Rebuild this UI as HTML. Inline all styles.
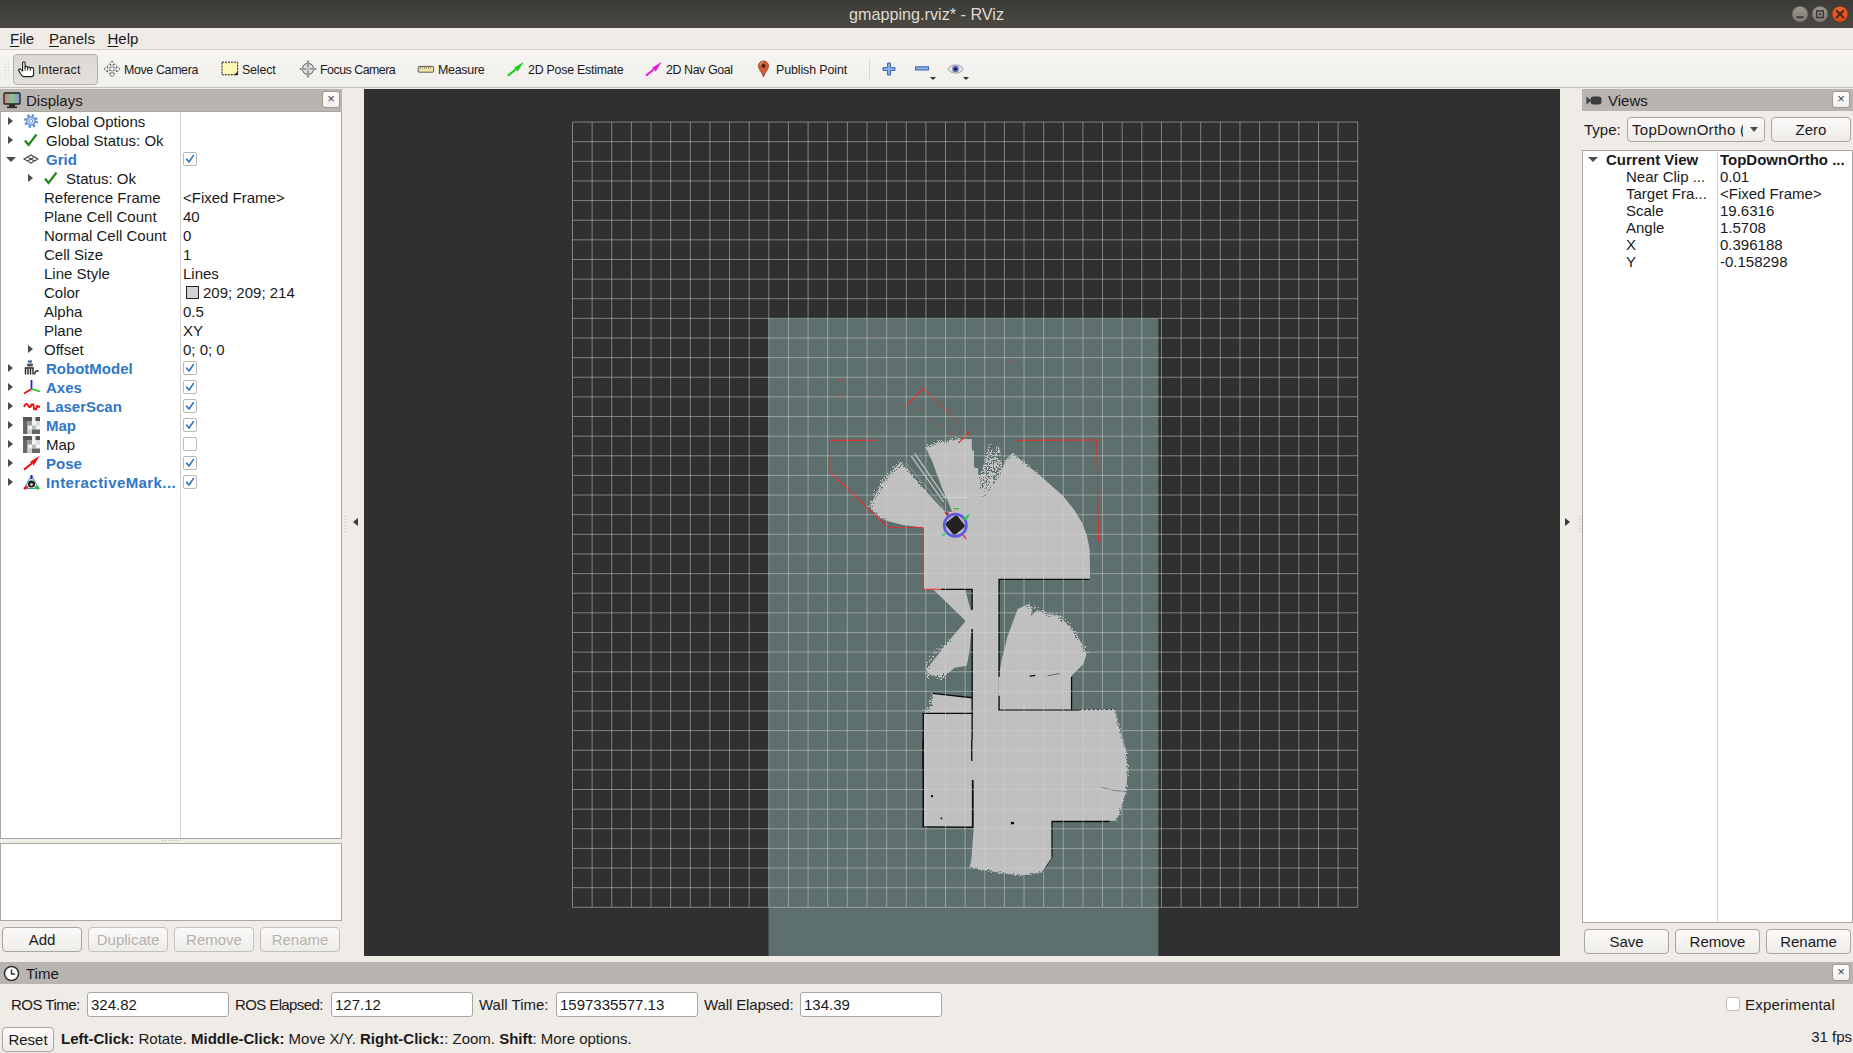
<!DOCTYPE html>
<html>
<head>
<meta charset="utf-8">
<title>gmapping.rviz* - RViz</title>
<style>
*{box-sizing:border-box;margin:0;padding:0}
html,body{width:1853px;height:1053px;overflow:hidden;background:#efebe7}
body{font-family:"Liberation Sans",sans-serif;font-size:15px;color:#1a1a1a;position:relative}
.abs{position:absolute}
.t{position:absolute;white-space:nowrap;line-height:19px;height:19px}
#titlebar{left:0;top:0;width:1853px;height:28px;background:linear-gradient(#3b3a36,#4a4943)}
#titletext{left:0;top:0;width:1853px;height:28px;line-height:29px;text-align:center;color:#dfdbd2;font-size:16.2px}
#menubar{left:0;top:28px;width:1853px;height:21px;background:#efebe7}
#menubar span{position:absolute;top:1px;line-height:20px;font-size:15px}
#menubar u{text-decoration-thickness:1px;text-underline-offset:2px}
#toolbar{left:0;top:49px;width:1853px;height:39px;background:linear-gradient(#f7f5f1,#f1efeb);border-top:1px solid #d3cfc9;border-bottom:1px solid #c4c0ba}
.tb{position:absolute;top:60px;line-height:20px;font-size:12.4px;letter-spacing:-0.25px;white-space:nowrap}
.paneltitle{background:#b8b4b0}
.paneltitle .t{font-size:15px;line-height:22px;height:22px;margin-top:1px}
.closebtn{position:absolute;width:18px;height:17px;border:1px solid #9c9892;border-radius:3px;background:linear-gradient(#fdfdfc,#f2f0ed)}
.closebtn:after{content:"×";position:absolute;left:0;top:0;width:16px;height:15px;line-height:14px;text-align:center;font-size:13px;color:#444}
.tree{background:#fff;border:1px solid #aaa7a2}
.btn{position:absolute;border:1px solid #a9a59f;border-radius:4px;background:linear-gradient(#fbfaf9,#eeece8);text-align:center;font-size:15px;line-height:23px;height:25px}
.btn.dis{color:#b4b1ad;border-color:#c3bfba}
.inp{position:absolute;background:#fff;border:1px solid #aaa6a0;border-radius:3px;height:25px;top:991.5px;line-height:23px;padding-left:3px;font-size:15px}
.cb{position:absolute;width:14px;height:14px;border:1px solid #bcb8b3;border-radius:2px;background:#fff}
.cb svg{position:absolute;left:1px;top:1px}
.blue{color:#3077c6;font-weight:bold}
.arr{position:absolute;width:0;height:0;border-top:4.5px solid transparent;border-bottom:4.5px solid transparent;border-left:5px solid #4b4b4b}
.arrd{position:absolute;width:0;height:0;border-left:5px solid transparent;border-right:5px solid transparent;border-top:5.5px solid #4b4b4b}
</style>
</head>
<body>
<!-- TITLE BAR -->
<div id="titlebar" class="abs"></div>
<div id="titletext" class="abs">gmapping.rviz* - RViz</div>
<svg class="abs" style="left:1785px;top:0" width="68" height="28">
 <defs><linearGradient id="wbg" x1="0" y1="0" x2="0" y2="1"><stop offset="0" stop-color="#9a9791"/><stop offset="1" stop-color="#7f7c76"/></linearGradient>
 <linearGradient id="wbc" x1="0" y1="0" x2="0" y2="1"><stop offset="0" stop-color="#f0642c"/><stop offset="1" stop-color="#dd4a16"/></linearGradient></defs>
 <circle cx="15" cy="14.2" r="8" fill="url(#wbg)" stroke="#55534e" stroke-width="0.8"/>
 <rect x="11.3" y="16.4" width="7.4" height="1.8" fill="#3c3b37"/>
 <circle cx="35" cy="14.2" r="8" fill="url(#wbg)" stroke="#55534e" stroke-width="0.8"/>
 <rect x="31.7" y="10.9" width="6.6" height="6.6" fill="none" stroke="#3c3b37" stroke-width="1.5"/>
 <rect x="34" y="13.2" width="2" height="2" fill="#3c3b37"/>
 <circle cx="55" cy="14.2" r="8" fill="url(#wbc)" stroke="#7a3418" stroke-width="0.8"/>
 <path d="M51.6 10.8 L58.4 17.6 M58.4 10.8 L51.6 17.6" stroke="#3c2a20" stroke-width="2" stroke-linecap="round"/>
</svg>

<!-- MENU BAR -->
<div id="menubar" class="abs">
 <span style="left:10px"><u>F</u>ile</span>
 <span style="left:49px"><u>P</u>anels</span>
 <span style="left:107.5px"><u>H</u>elp</span>
</div>

<!-- TOOLBAR -->
<div id="toolbar" class="abs"></div>
<div class="abs" style="left:5px;top:61px;width:1px;height:17px;background:repeating-linear-gradient(180deg,#d2cec8 0 1px,transparent 1px 3px)"></div><div class="abs" style="left:8px;top:61px;width:1px;height:17px;background:repeating-linear-gradient(180deg,#d2cec8 0 1px,transparent 1px 3px)"></div>
<div class="abs" style="left:13px;top:54px;width:85px;height:31px;border:1px solid #b3afa9;border-radius:4px;background:linear-gradient(#dcd9d4,#e3e0db)"></div>
<svg class="abs" style="left:18px;top:60.5px" width="17" height="17" viewBox="0 0 17 17"><path d="M4.6 10 V2 C4.6 0.3 7.1 0.3 7.1 2 V6.4 C7.1 5 9.7 5 9.7 6.6 V7 C9.7 5.6 12.3 5.6 12.3 7.2 V7.6 C12.3 6.3 15.6 6.2 15.6 8.2 V13.2 C15.6 14.8 14.7 15.6 13.2 15.6 H6.2 C4.8 15.6 3.8 14.8 3.2 13.7 L0.9 9.9 C0.1 8.4 1.6 7.4 2.6 8.4 Z" fill="#fff" stroke="#222" stroke-width="1.15" stroke-linejoin="round"/><path d="M7.1 6.4 V9.6 M9.7 7 V9.6 M12.3 7.6 V9.6" stroke="#222" stroke-width="1" fill="none"/></svg>
<div class="tb" style="left:38px;letter-spacing:0.15px">Interact</div>
<svg class="abs" style="left:103px;top:60px" width="18" height="18" viewBox="0 0 18 18"><path d="M9 1 L12 4.5 H10 V8 H13.5 V6 L17 9 L13.5 12 V10 H10 V13.5 H12 L9 17 L6 13.5 H8 V10 H4.5 V12 L1 9 L4.5 6 V8 H8 V4.5 H6 Z" fill="#fdfdfd" stroke="#4a4a4a" stroke-width="1" stroke-dasharray="1.3 0.6"/></svg>
<div class="tb" style="left:124px;letter-spacing:-0.35px">Move Camera</div>
<svg class="abs" style="left:221px;top:61px" width="18" height="15" viewBox="0 0 18 15"><rect x="1" y="1.2" width="15.6" height="12.6" fill="#fcf7b6" stroke="#1c1c1c" stroke-width="1" stroke-dasharray="2 1"/><path d="M16.8 10.5 V14 H13.2 Z" fill="#111"/></svg>
<div class="tb" style="left:242px;letter-spacing:-0.16px">Select</div>
<svg class="abs" style="left:298.5px;top:60.2px" width="18" height="18" viewBox="0 0 18 18"><circle cx="9" cy="9" r="5.6" fill="#f4f4f4" stroke="#6a6a6a" stroke-width="1.1"/><circle cx="9" cy="9" r="3.3" fill="none" stroke="#8a8a8a" stroke-width="0.9" stroke-dasharray="1.2 0.8"/><path d="M9 0.8 V6.4 M9 11.6 V17.2 M0.8 9 H6.4 M11.6 9 H17.2" stroke="#6a6a6a" stroke-width="2.2"/><path d="M9 1.4 V6 M9 12 V16.6 M1.4 9 H6 M12 9 H16.6" stroke="#f4f4f4" stroke-width="0.8"/><path d="M9 6 V12 M6 9 H12" stroke="#8a8a8a" stroke-width="0.8"/></svg>
<div class="tb" style="left:320px;letter-spacing:-0.5px">Focus Camera</div>
<svg class="abs" style="left:417px;top:65px" width="18" height="9" viewBox="0 0 18 9"><rect x="1.2" y="1.4" width="15.4" height="5.8" rx="0.8" fill="#ece3a4" stroke="#5a5a5a" stroke-width="1"/><path d="M3.5 2 V4 M5.5 2 V3.4 M7.5 2 V4 M9.5 2 V3.4 M11.5 2 V4 M13.5 2 V3.4" stroke="#7a7452" stroke-width="0.7"/></svg>
<div class="tb" style="left:438px;letter-spacing:-0.25px">Measure</div>
<svg class="abs" style="left:507px;top:61px" width="17" height="16" viewBox="0 0 17 16"><path d="M1 14.6 L9 8.2" stroke="#18d018" stroke-width="2"/><path d="M6.8 7 L16.8 0.8 L10.6 10.8 L9.4 8.6 Z" fill="#18d018"/></svg>
<div class="tb" style="left:528px;letter-spacing:-0.24px">2D Pose Estimate</div>
<svg class="abs" style="left:645px;top:61px" width="17" height="16" viewBox="0 0 17 16"><path d="M1 14.6 L9 8.2" stroke="#e818d8" stroke-width="2"/><path d="M6.8 7 L16.8 0.8 L10.6 10.8 L9.4 8.6 Z" fill="#e818d8"/></svg>
<div class="tb" style="left:666px;letter-spacing:-0.4px">2D Nav Goal</div>
<svg class="abs" style="left:757px;top:60px" width="13" height="18" viewBox="0 0 13 18"><path d="M6.5 17 C5.5 12.5 1.5 10 1.5 6 C1.5 3 3.7 1 6.5 1 C9.3 1 11.5 3 11.5 6 C11.5 10 7.5 12.5 6.5 17 Z" fill="#cc5a32" stroke="#9a4422" stroke-width="0.8"/><path d="M3.2 5 C3.4 3.2 4.8 2.2 6 2.2" stroke="#eea988" stroke-width="1" fill="none"/><circle cx="6.5" cy="5.8" r="1.9" fill="#4a1c0c"/></svg>
<div class="tb" style="left:776px;letter-spacing:-0.1px">Publish Point</div>
<div class="abs" style="left:869px;top:60px;width:1px;height:19px;background:#d9d5cf"></div>
<svg class="abs" style="left:882px;top:62px" width="14" height="14" viewBox="0 0 14 14"><path d="M5.6 1 H8.4 V5.6 H13 V8.4 H8.4 V13 H5.6 V8.4 H1 V5.6 H5.6 Z" fill="#8db4e6" stroke="#2f62b0" stroke-width="1"/></svg>
<svg class="abs" style="left:915px;top:66px" width="14" height="6" viewBox="0 0 14 6"><rect x="0.6" y="0.8" width="12.8" height="3.2" fill="#8db4e6" stroke="#2f62b0" stroke-width="1"/></svg>
<div class="abs" style="left:930px;top:77px;width:0;height:0;border-left:3px solid transparent;border-right:3px solid transparent;border-top:3.5px solid #333"></div>
<svg class="abs" style="left:947px;top:63px" width="17" height="12" viewBox="0 0 17 12"><path d="M0.8 6 C4 0.5 13 0.5 16.2 6 C13 11.5 4 11.5 0.8 6 Z" fill="#e8e8ee" stroke="#9a9aa8" stroke-width="1"/><circle cx="8.5" cy="6" r="3.3" fill="#5b6fb8"/><circle cx="8.5" cy="6" r="1.6" fill="#1a1a30"/></svg>
<div class="abs" style="left:963px;top:77px;width:0;height:0;border-left:3px solid transparent;border-right:3px solid transparent;border-top:3.5px solid #333"></div>

<!-- LEFT PANEL -->
<div class="abs paneltitle" style="left:0;top:89px;width:342px;height:22px"><div class="t" style="left:26px;top:0">Displays</div></div>
<svg class="abs" style="left:3px;top:92px" width="18" height="17" viewBox="0 0 18 17"><defs><linearGradient id="mon" x1="0" x2="1" y1="0" y2="0"><stop offset="0" stop-color="#d9797f"/><stop offset="0.5" stop-color="#86c78d"/><stop offset="1" stop-color="#8f8fd8"/></linearGradient></defs><rect x="1" y="1" width="16" height="11" rx="1" fill="url(#mon)" stroke="#222" stroke-width="1.3"/><rect x="6" y="12.5" width="6" height="2" fill="#222"/><rect x="4" y="14.5" width="10" height="1.6" fill="#222"/></svg>
<div class="closebtn" style="left:322px;top:91px"></div>
<div class="abs tree" style="left:0;top:111px;width:342px;height:728px"></div>
<div class="abs" style="left:180px;top:112px;width:1px;height:726px;background:#d7d5d2"></div>
<div class="arr" style="left:8px;top:116.5px"></div>
<svg class="abs" style="left:23px;top:113px" width="16" height="16" viewBox="0 0 16 16"><circle cx="8" cy="8" r="5.6" fill="none" stroke="#5b8ed6" stroke-width="2.6" stroke-dasharray="2.2 2.2"/><circle cx="8" cy="8" r="4.2" fill="#c9dbf3" stroke="#5b8ed6" stroke-width="1.2"/><circle cx="8" cy="8" r="1.6" fill="#fff" stroke="#5b8ed6" stroke-width="0.8"/></svg>
<div class="t" style="left:46px;top:112px">Global Options</div>
<div class="arr" style="left:8px;top:135.5px"></div>
<svg class="abs" style="left:23px;top:132px" width="16" height="16" viewBox="0 0 16 16"><path d="M2 8.5 L5.5 13 L13.5 2.5" fill="none" stroke="#1d8a1d" stroke-width="2.2" stroke-linecap="butt" stroke-linejoin="miter"/></svg>
<div class="t" style="left:46px;top:131px">Global Status: Ok</div>
<div class="arrd" style="left:6px;top:156.5px"></div>
<svg class="abs" style="left:23px;top:151px" width="16" height="16" viewBox="0 0 16 16"><path d="M1 8 L8 4 L15 8 L8 12 Z M4.5 6 L11.5 10 M11.5 6 L4.5 10" fill="none" stroke="#444" stroke-width="1.1"/></svg>
<div class="t blue" style="left:46px;top:150px">Grid</div>
<div class="cb" style="left:183px;top:152px"><svg width="10" height="10" viewBox="0 0 10 10"><path d="M1.6 5.2 L4 8 L8.4 1.6" fill="none" stroke="#2f6fb8" stroke-width="1.6" stroke-linecap="round" stroke-linejoin="round"/></svg></div>
<div class="arr" style="left:28px;top:173.5px"></div>
<svg class="abs" style="left:43px;top:170px" width="16" height="16" viewBox="0 0 16 16"><path d="M2 8.5 L5.5 13 L13.5 2.5" fill="none" stroke="#1d8a1d" stroke-width="2.2" stroke-linecap="butt" stroke-linejoin="miter"/></svg>
<div class="t" style="left:66px;top:169px">Status: Ok</div>
<div class="t" style="left:44px;top:188px">Reference Frame</div>
<div class="t" style="left:183px;top:188px">&lt;Fixed Frame&gt;</div>
<div class="t" style="left:44px;top:207px">Plane Cell Count</div>
<div class="t" style="left:183px;top:207px">40</div>
<div class="t" style="left:44px;top:226px">Normal Cell Count</div>
<div class="t" style="left:183px;top:226px">0</div>
<div class="t" style="left:44px;top:245px">Cell Size</div>
<div class="t" style="left:183px;top:245px">1</div>
<div class="t" style="left:44px;top:264px">Line Style</div>
<div class="t" style="left:183px;top:264px">Lines</div>
<div class="t" style="left:44px;top:283px">Color</div>
<div class="abs" style="left:186px;top:286px;width:13px;height:13px;background:#d1d1d6;border:1px solid #222"></div>
<div class="t" style="left:203px;top:283px">209; 209; 214</div>
<div class="t" style="left:44px;top:302px">Alpha</div>
<div class="t" style="left:183px;top:302px">0.5</div>
<div class="t" style="left:44px;top:321px">Plane</div>
<div class="t" style="left:183px;top:321px">XY</div>
<div class="arr" style="left:28px;top:344.5px"></div>
<div class="t" style="left:44px;top:340px">Offset</div>
<div class="t" style="left:183px;top:340px">0; 0; 0</div>
<div class="arr" style="left:8px;top:363.5px"></div>
<svg class="abs" style="left:23px;top:360px" width="18" height="16" viewBox="0 0 18 16"><rect x="5" y="0.5" width="4" height="2" fill="#2a4fa0"/><rect x="4" y="3.5" width="6" height="3" rx="1" fill="#555"/><path d="M2.5 14.5 V8 H10 V14.5 M5 9 V14.5 M7.5 9 V14.5 M11.5 14.5 C12 11 14 10 15.5 11.5" fill="none" stroke="#222" stroke-width="1.4"/></svg>
<div class="t blue" style="left:46px;top:359px">RobotModel</div>
<div class="cb" style="left:183px;top:361px"><svg width="10" height="10" viewBox="0 0 10 10"><path d="M1.6 5.2 L4 8 L8.4 1.6" fill="none" stroke="#2f6fb8" stroke-width="1.6" stroke-linecap="round" stroke-linejoin="round"/></svg></div>
<div class="arr" style="left:8px;top:382.5px"></div>
<svg class="abs" style="left:23px;top:379px" width="18" height="16" viewBox="0 0 18 16"><path d="M8.5 10 V1" stroke="#2020ff" stroke-width="1.8"/><path d="M8.5 10 L1 14.5" stroke="#ee1010" stroke-width="1.8"/><path d="M8.5 10 L17 12.5" stroke="#10cc10" stroke-width="1.8"/></svg>
<div class="t blue" style="left:46px;top:378px">Axes</div>
<div class="cb" style="left:183px;top:380px"><svg width="10" height="10" viewBox="0 0 10 10"><path d="M1.6 5.2 L4 8 L8.4 1.6" fill="none" stroke="#2f6fb8" stroke-width="1.6" stroke-linecap="round" stroke-linejoin="round"/></svg></div>
<div class="arr" style="left:8px;top:401.5px"></div>
<svg class="abs" style="left:23px;top:398px" width="18" height="16" viewBox="0 0 18 16"><path d="M1 9 C2.5 5 4 5 5.5 8 C6.5 10 8 9 8.5 6.5 L10.5 6.5 L11 11 L13 11.5 L14 8 L17 9" fill="none" stroke="#ee1010" stroke-width="1.9" stroke-linejoin="round"/></svg>
<div class="t blue" style="left:46px;top:397px">LaserScan</div>
<div class="cb" style="left:183px;top:399px"><svg width="10" height="10" viewBox="0 0 10 10"><path d="M1.6 5.2 L4 8 L8.4 1.6" fill="none" stroke="#2f6fb8" stroke-width="1.6" stroke-linecap="round" stroke-linejoin="round"/></svg></div>
<div class="arr" style="left:8px;top:420.5px"></div>
<svg class="abs" style="left:23px;top:417px" width="17" height="17" viewBox="0 0 17 17"><rect x="0" y="0" width="17" height="17" fill="#f2f2f2"/><rect x="0" y="0" width="9" height="4" fill="#555"/><rect x="0" y="4" width="4.5" height="13" fill="#666"/><rect x="4.5" y="4" width="4.5" height="4.5" fill="#999"/><rect x="12.5" y="0" width="4.5" height="4" fill="#555"/><rect x="9" y="8.5" width="4" height="4" fill="#bbb"/><rect x="9" y="12.5" width="8" height="4.5" fill="#666"/><rect x="4.5" y="12.5" width="4.5" height="4.5" fill="#ccc"/><rect x="13" y="4" width="4" height="4.5" fill="#ddd"/></svg>
<div class="t blue" style="left:46px;top:416px">Map</div>
<div class="cb" style="left:183px;top:418px"><svg width="10" height="10" viewBox="0 0 10 10"><path d="M1.6 5.2 L4 8 L8.4 1.6" fill="none" stroke="#2f6fb8" stroke-width="1.6" stroke-linecap="round" stroke-linejoin="round"/></svg></div>
<div class="arr" style="left:8px;top:439.5px"></div>
<svg class="abs" style="left:23px;top:436px" width="17" height="17" viewBox="0 0 17 17"><rect x="0" y="0" width="17" height="17" fill="#f2f2f2"/><rect x="0" y="0" width="9" height="4" fill="#555"/><rect x="0" y="4" width="4.5" height="13" fill="#666"/><rect x="4.5" y="4" width="4.5" height="4.5" fill="#999"/><rect x="12.5" y="0" width="4.5" height="4" fill="#555"/><rect x="9" y="8.5" width="4" height="4" fill="#bbb"/><rect x="9" y="12.5" width="8" height="4.5" fill="#666"/><rect x="4.5" y="12.5" width="4.5" height="4.5" fill="#ccc"/><rect x="13" y="4" width="4" height="4.5" fill="#ddd"/></svg>
<div class="t" style="left:46px;top:435px">Map</div>
<div class="cb" style="left:183px;top:437px"></div>
<div class="arr" style="left:8px;top:458.5px"></div>
<svg class="abs" style="left:23px;top:455px" width="18" height="16" viewBox="0 0 18 16"><path d="M1 14.6 L9 8.2" stroke="#ee1010" stroke-width="2"/><path d="M6.8 7 L16.8 0.8 L10.6 10.8 L9.4 8.6 Z" fill="#ee1010"/></svg>
<div class="t blue" style="left:46px;top:454px">Pose</div>
<div class="cb" style="left:183px;top:456px"><svg width="10" height="10" viewBox="0 0 10 10"><path d="M1.6 5.2 L4 8 L8.4 1.6" fill="none" stroke="#2f6fb8" stroke-width="1.6" stroke-linecap="round" stroke-linejoin="round"/></svg></div>
<div class="arr" style="left:8px;top:477.5px"></div>
<svg class="abs" style="left:23px;top:474px" width="18" height="17" viewBox="0 0 18 17"><path d="M8.5 1.5 L16 14.5 H1 Z" fill="#ddd" stroke="#3a9" stroke-width="1"/><path d="M8.5 1 L8.5 5" stroke="#22c" stroke-width="2"/><path d="M1 15 L4.5 12.5" stroke="#d22" stroke-width="2.4"/><path d="M16 15 L12.5 12.5" stroke="#2b2" stroke-width="2.4"/><circle cx="8.5" cy="10" r="3.6" fill="#222"/><circle cx="8.5" cy="10.5" r="1.3" fill="#eee"/></svg>
<div class="t blue" style="left:46px;top:473px;letter-spacing:0.42px">InteractiveMark...</div>
<div class="cb" style="left:183px;top:475px"><svg width="10" height="10" viewBox="0 0 10 10"><path d="M1.6 5.2 L4 8 L8.4 1.6" fill="none" stroke="#2f6fb8" stroke-width="1.6" stroke-linecap="round" stroke-linejoin="round"/></svg></div>
<div class="abs" style="left:162px;top:840px;width:18px;height:1px;background:repeating-linear-gradient(90deg,#b9b5b0 0 1px,transparent 1px 3px)"></div>
<div class="abs tree" style="left:0;top:843px;width:342px;height:78px"></div>
<div class="btn" style="left:2px;top:927px;width:80px">Add</div>
<div class="btn dis" style="left:88px;top:927px;width:80px">Duplicate</div>
<div class="btn dis" style="left:174px;top:927px;width:80px">Remove</div>
<div class="btn dis" style="left:260px;top:927px;width:80px">Rename</div>
<div class="abs" style="left:353px;top:518.4px;width:0;height:0;border-top:4.2px solid transparent;border-bottom:4.2px solid transparent;border-right:5px solid #3a3a3a"></div>
<div class="abs" style="left:345px;top:516px;width:1px;height:17px;background:repeating-linear-gradient(180deg,#bdb9b4 0 1px,transparent 1px 3px)"></div>

<!-- 3D VIEW -->
<div id="view" class="abs" style="left:364px;top:89px;width:1196px;height:867px;background:#303030;overflow:hidden"><svg class="abs" style="left:0;top:0" width="1196" height="867" viewBox="364 89 1196 867" shape-rendering="auto">
<rect x="768.5" y="318.6" width="389.8" height="700" fill="#5e706d"/>
<polygon points="923.2,527.6 902.7,525 888.5,521.2 879,517.4 870,506.9 875.2,495.5 881.8,483.2 891.3,471.8 900.8,462.3 905.6,468 917,481.3 926.5,491.7 936,502.2 945.5,511.7 952.1,511.7 948.3,502.2 941.7,487 936,471.8 932.2,461.3 925.5,447.1 928.4,445.7 938.8,441.9 945.5,440.9 951.2,439.5 971.7,438.9 972,450.3 974,451 974,467.6 978,468.2 978.3,475 980,475 983.3,466.3 986,455 989.3,443 991.3,443.6 992.8,452 995,452 996.6,445 998,445 1000,450 1001.9,462 1001.9,468.2 1007,458.5 1012.8,453.1 1024.2,462.8 1038.5,474.2 1049.9,484.2 1062.7,495.6 1074.1,509.8 1081.9,522.6 1086.9,535.4 1089.7,549.7 1090,579 923.2,579" fill="#c0c0c0" />
<polyline points="911.3,456.1 943.6,502.2" fill="none" stroke="#c0c0c0" stroke-width="1.25" />
<polyline points="914.6,453.3 945.5,498.4" fill="none" stroke="#c0c0c0" stroke-width="1.25" />
<polyline points="906,463 944,508" fill="none" stroke="#8a9896" stroke-width="1" />
<polyline points="942.6,497.6 968.3,497.6" fill="none" stroke="#f4f4f4" stroke-width="1" stroke-dasharray="1 1.6"/>
<g transform="translate(810 560) scale(0.19968)"><polygon points="567,0 1400,0 1400,96 945,96 945,760 815,760 815,345 808,350 800,450 785,530 725,540 665,590 590,575 585,545 700,400 780,305 620,150 567,147" fill="#c0c0c0" /><polygon points="778,150 812,150 812,250 803,245" fill="#5e706d" /><polygon points="945,585 960,500 990,380 1040,245 1090,222 1115,235 1105,280 1140,250 1180,270 1240,275 1300,330 1350,400 1385,470 1370,520 1310,580 1310,752 945,752" fill="#c0c0c0" /><polygon points="615,668 815,690 815,1052 567,1052 565,770 600,740" fill="#c0c0c0" /><polygon points="945,752 1525,748 1550,850 1580,950 1590,1052 815,1052 815,752" fill="#c0c0c0" /><polyline points="655,147 815,147" fill="none" stroke="#0b0b0b" stroke-width="6.6" /><polyline points="812,147 812,250" fill="none" stroke="#0b0b0b" stroke-width="6.6" /><polyline points="812,345 812,1005" fill="none" stroke="#0b0b0b" stroke-width="6.6" /><polyline points="945,97 1400,97" fill="none" stroke="#0b0b0b" stroke-width="6.6" /><polyline points="947,97 947,585" fill="none" stroke="#0b0b0b" stroke-width="6.6" /><polyline points="947,680 947,752" fill="none" stroke="#0b0b0b" stroke-width="6.6" /><polyline points="945,752 1350,752" fill="none" stroke="#0b0b0b" stroke-width="6.6" /><polyline points="1350,750 1530,748" fill="none" stroke="#0b0b0b" stroke-width="5" stroke-dasharray="8 14"/><polyline points="1310,585 1310,752" fill="none" stroke="#0b0b0b" stroke-width="6.6" /><polyline points="615,668 812,690" fill="none" stroke="#0b0b0b" stroke-width="6.6" /><polyline points="565,768 812,768" fill="none" stroke="#0b0b0b" stroke-width="6.6" /><polyline points="567,768 567,1052" fill="none" stroke="#0b0b0b" stroke-width="7.2" /><polyline points="1100,582 1128,578" fill="none" stroke="#0b0b0b" stroke-width="6.6" /><polyline points="1190,580 1250,568" fill="none" stroke="#4a5452" stroke-width="4" /><polyline points="1460,906 1485,904" fill="none" stroke="#4a5452" stroke-width="4" /></g>
<g transform="translate(810 740) scale(0.19968)"><polygon points="567,0 1560,0 1585,60 1590,150 1585,250 1565,320 1545,380 1530,405 1212,408 1215,590 1165,660 1110,672 1050,678 950,665 850,648 800,635 808,600 820,440 567,435" fill="#c0c0c0" /><polyline points="567,0 567,435" fill="none" stroke="#0b0b0b" stroke-width="7.6" /><polyline points="565,435 812,437" fill="none" stroke="#0b0b0b" stroke-width="6.6" /><polyline points="810,0 810,105" fill="none" stroke="#0b0b0b" stroke-width="6.6" /><polyline points="815,200 815,440" fill="none" stroke="#0b0b0b" stroke-width="9" /><polyline points="1210,408 1500,408" fill="none" stroke="#0b0b0b" stroke-width="7.2" /><polyline points="1212,408 1212,590" fill="none" stroke="#0b0b0b" stroke-width="6.6" /><polyline points="1212,590 1165,660" fill="none" stroke="#0b0b0b" stroke-width="4" /><polyline points="1458,236 1520,252 1580,258" fill="none" stroke="#4a5452" stroke-width="3" /><rect x="1006" y="410" width="16" height="12" fill="#0e0e0e"/><rect x="606" y="276" width="10" height="10" fill="#0e0e0e"/><rect x="654" y="388" width="8" height="8" fill="#0e0e0e"/></g>
<path d="M870 506h1v1h-1zM872 506h1v1h-1zM873 503h1v1h-1zM875 498h1v1h-1zM876 496h1v1h-1zM876 512h1v1h-1zM877 493h1v1h-1zM877 495h1v1h-1zM877 513h1v1h-1zM877 515h1v1h-1zM878 492h1v1h-1zM879 493h1v1h-1zM879 516h1v1h-1zM879 517h1v1h-1zM880 486h1v1h-1zM880 490h1v1h-1zM881 487h1v1h-1zM881 488h1v1h-1zM882 487h1v1h-1zM883 518h1v1h-1zM884 480h1v1h-1zM884 482h1v1h-1zM885 518h1v1h-1zM886 478h1v1h-1zM886 479h1v1h-1zM886 480h1v1h-1zM887 478h1v1h-1zM889 476h1v1h-1zM890 474h1v1h-1zM892 471h1v1h-1zM892 473h1v1h-1zM894 470h1v1h-1zM894 471h1v1h-1zM896 469h1v1h-1zM898 467h1v1h-1zM899 467h1v1h-1zM900 465h1v1h-1zM900 466h1v1h-1zM901 464h1v1h-1zM903 466h1v1h-1zM907 471h1v1h-1zM911 475h1v1h-1zM913 477h1v1h-1zM918 483h1v1h-1zM920 486h1v1h-1zM926 712h1v1h-1zM927 446h1v1h-1zM928 673h1v1h-1zM928 711h1v1h-1zM929 446h1v1h-1zM929 665h1v1h-1zM929 668h1v1h-1zM929 709h1v1h-1zM930 446h1v1h-1zM930 674h1v1h-1zM930 705h1v1h-1zM931 700h1v1h-1zM931 702h1v1h-1zM931 704h1v1h-1zM931 705h1v1h-1zM932 445h1v1h-1zM932 697h1v1h-1zM932 698h1v1h-1zM932 705h1v1h-1zM933 444h1v1h-1zM933 675h1v1h-1zM935 444h1v1h-1zM937 675h1v1h-1zM937 676h1v1h-1zM939 675h1v1h-1zM940 442h1v1h-1zM941 441h1v1h-1zM941 677h1v1h-1zM942 675h1v1h-1zM942 676h1v1h-1zM943 673h1v1h-1zM943 674h1v1h-1zM943 675h1v1h-1zM944 442h1v1h-1zM946 441h1v1h-1zM946 442h1v1h-1zM946 644h1v1h-1zM947 673h1v1h-1zM948 440h1v1h-1zM948 441h1v1h-1zM950 641h1v1h-1zM953 439h1v1h-1zM953 440h1v1h-1zM954 439h1v1h-1zM957 439h1v1h-1zM972 867h1v1h-1zM977 868h1v1h-1zM979 477h1v1h-1zM980 474h1v1h-1zM980 479h1v1h-1zM980 481h1v1h-1zM980 483h1v1h-1zM980 487h1v1h-1zM980 488h1v1h-1zM981 473h1v1h-1zM981 478h1v1h-1zM981 480h1v1h-1zM981 485h1v1h-1zM982 469h1v1h-1zM982 470h1v1h-1zM982 472h1v1h-1zM982 473h1v1h-1zM982 483h1v1h-1zM982 484h1v1h-1zM982 485h1v1h-1zM982 486h1v1h-1zM982 487h1v1h-1zM982 496h1v1h-1zM983 470h1v1h-1zM983 472h1v1h-1zM983 473h1v1h-1zM983 477h1v1h-1zM983 479h1v1h-1zM983 480h1v1h-1zM983 483h1v1h-1zM983 486h1v1h-1zM984 462h1v1h-1zM984 463h1v1h-1zM984 464h1v1h-1zM984 466h1v1h-1zM984 468h1v1h-1zM984 472h1v1h-1zM984 480h1v1h-1zM984 482h1v1h-1zM984 483h1v1h-1zM984 488h1v1h-1zM984 491h1v1h-1zM984 495h1v1h-1zM985 457h1v1h-1zM985 458h1v1h-1zM985 460h1v1h-1zM985 461h1v1h-1zM985 463h1v1h-1zM985 466h1v1h-1zM985 468h1v1h-1zM985 470h1v1h-1zM985 473h1v1h-1zM985 477h1v1h-1zM985 481h1v1h-1zM985 482h1v1h-1zM985 494h1v1h-1zM985 495h1v1h-1zM986 454h1v1h-1zM986 455h1v1h-1zM986 457h1v1h-1zM986 463h1v1h-1zM986 464h1v1h-1zM986 467h1v1h-1zM986 468h1v1h-1zM986 469h1v1h-1zM986 471h1v1h-1zM986 472h1v1h-1zM986 473h1v1h-1zM986 474h1v1h-1zM986 475h1v1h-1zM986 478h1v1h-1zM986 480h1v1h-1zM986 481h1v1h-1zM986 482h1v1h-1zM986 484h1v1h-1zM986 487h1v1h-1zM986 488h1v1h-1zM987 450h1v1h-1zM987 451h1v1h-1zM987 454h1v1h-1zM987 458h1v1h-1zM987 462h1v1h-1zM987 463h1v1h-1zM987 464h1v1h-1zM987 466h1v1h-1zM987 470h1v1h-1zM987 473h1v1h-1zM987 476h1v1h-1zM987 479h1v1h-1zM987 485h1v1h-1zM987 870h1v1h-1zM988 446h1v1h-1zM988 448h1v1h-1zM988 452h1v1h-1zM988 453h1v1h-1zM988 455h1v1h-1zM988 456h1v1h-1zM988 458h1v1h-1zM988 459h1v1h-1zM988 460h1v1h-1zM988 466h1v1h-1zM988 468h1v1h-1zM988 469h1v1h-1zM988 470h1v1h-1zM988 472h1v1h-1zM988 473h1v1h-1zM988 476h1v1h-1zM988 477h1v1h-1zM988 481h1v1h-1zM988 484h1v1h-1zM988 490h1v1h-1zM988 869h1v1h-1zM988 870h1v1h-1zM989 443h1v1h-1zM989 445h1v1h-1zM989 446h1v1h-1zM989 448h1v1h-1zM989 449h1v1h-1zM989 450h1v1h-1zM989 451h1v1h-1zM989 453h1v1h-1zM989 455h1v1h-1zM989 456h1v1h-1zM989 457h1v1h-1zM989 459h1v1h-1zM989 463h1v1h-1zM989 464h1v1h-1zM989 466h1v1h-1zM989 467h1v1h-1zM989 468h1v1h-1zM989 470h1v1h-1zM989 476h1v1h-1zM989 478h1v1h-1zM989 482h1v1h-1zM989 489h1v1h-1zM989 870h1v1h-1zM990 443h1v1h-1zM990 444h1v1h-1zM990 445h1v1h-1zM990 446h1v1h-1zM990 447h1v1h-1zM990 448h1v1h-1zM990 449h1v1h-1zM990 450h1v1h-1zM990 451h1v1h-1zM990 455h1v1h-1zM990 456h1v1h-1zM990 457h1v1h-1zM990 463h1v1h-1zM990 467h1v1h-1zM990 470h1v1h-1zM990 478h1v1h-1zM990 487h1v1h-1zM991 445h1v1h-1zM991 446h1v1h-1zM991 447h1v1h-1zM991 448h1v1h-1zM991 449h1v1h-1zM991 453h1v1h-1zM991 455h1v1h-1zM991 457h1v1h-1zM991 458h1v1h-1zM991 461h1v1h-1zM991 462h1v1h-1zM991 463h1v1h-1zM991 467h1v1h-1zM991 469h1v1h-1zM991 470h1v1h-1zM991 471h1v1h-1zM991 476h1v1h-1zM991 870h1v1h-1zM992 451h1v1h-1zM992 452h1v1h-1zM992 453h1v1h-1zM992 454h1v1h-1zM992 456h1v1h-1zM992 457h1v1h-1zM992 460h1v1h-1zM992 471h1v1h-1zM992 472h1v1h-1zM992 475h1v1h-1zM993 453h1v1h-1zM993 454h1v1h-1zM993 456h1v1h-1zM993 457h1v1h-1zM993 458h1v1h-1zM993 460h1v1h-1zM993 461h1v1h-1zM993 462h1v1h-1zM993 463h1v1h-1zM993 464h1v1h-1zM993 466h1v1h-1zM993 467h1v1h-1zM993 468h1v1h-1zM993 471h1v1h-1zM993 476h1v1h-1zM993 477h1v1h-1zM993 478h1v1h-1zM993 482h1v1h-1zM993 483h1v1h-1zM994 453h1v1h-1zM994 454h1v1h-1zM994 456h1v1h-1zM994 460h1v1h-1zM994 462h1v1h-1zM994 468h1v1h-1zM994 469h1v1h-1zM994 470h1v1h-1zM994 471h1v1h-1zM994 472h1v1h-1zM994 475h1v1h-1zM994 476h1v1h-1zM994 477h1v1h-1zM994 478h1v1h-1zM994 479h1v1h-1zM994 481h1v1h-1zM994 482h1v1h-1zM995 450h1v1h-1zM995 451h1v1h-1zM995 452h1v1h-1zM995 453h1v1h-1zM995 456h1v1h-1zM995 460h1v1h-1zM995 469h1v1h-1zM995 472h1v1h-1zM995 475h1v1h-1zM995 476h1v1h-1zM995 479h1v1h-1zM996 445h1v1h-1zM996 449h1v1h-1zM996 451h1v1h-1zM996 456h1v1h-1zM996 457h1v1h-1zM996 459h1v1h-1zM996 460h1v1h-1zM996 461h1v1h-1zM996 466h1v1h-1zM996 467h1v1h-1zM996 471h1v1h-1zM996 472h1v1h-1zM996 473h1v1h-1zM996 474h1v1h-1zM996 475h1v1h-1zM996 477h1v1h-1zM996 479h1v1h-1zM997 445h1v1h-1zM997 446h1v1h-1zM997 447h1v1h-1zM997 448h1v1h-1zM997 449h1v1h-1zM997 450h1v1h-1zM997 452h1v1h-1zM997 453h1v1h-1zM997 454h1v1h-1zM997 456h1v1h-1zM997 457h1v1h-1zM997 461h1v1h-1zM997 463h1v1h-1zM997 464h1v1h-1zM997 467h1v1h-1zM997 469h1v1h-1zM997 470h1v1h-1zM997 471h1v1h-1zM997 474h1v1h-1zM998 446h1v1h-1zM998 453h1v1h-1zM998 454h1v1h-1zM998 455h1v1h-1zM998 456h1v1h-1zM998 457h1v1h-1zM998 458h1v1h-1zM998 459h1v1h-1zM998 468h1v1h-1zM998 469h1v1h-1zM998 471h1v1h-1zM998 473h1v1h-1zM998 474h1v1h-1zM998 475h1v1h-1zM998 477h1v1h-1zM998 871h1v1h-1zM999 449h1v1h-1zM999 453h1v1h-1zM999 454h1v1h-1zM999 456h1v1h-1zM999 457h1v1h-1zM999 458h1v1h-1zM999 459h1v1h-1zM999 462h1v1h-1zM999 464h1v1h-1zM999 465h1v1h-1zM999 466h1v1h-1zM999 468h1v1h-1zM999 469h1v1h-1zM1000 454h1v1h-1zM1000 456h1v1h-1zM1000 457h1v1h-1zM1000 458h1v1h-1zM1000 459h1v1h-1zM1000 461h1v1h-1zM1000 464h1v1h-1zM1000 467h1v1h-1zM1000 469h1v1h-1zM1000 472h1v1h-1zM1000 474h1v1h-1zM1000 871h1v1h-1zM1001 459h1v1h-1zM1001 461h1v1h-1zM1001 466h1v1h-1zM1001 469h1v1h-1zM1002 467h1v1h-1zM1003 872h1v1h-1zM1004 463h1v1h-1zM1004 872h1v1h-1zM1008 458h1v1h-1zM1010 457h1v1h-1zM1013 455h1v1h-1zM1013 873h1v1h-1zM1014 455h1v1h-1zM1016 457h1v1h-1zM1017 874h1v1h-1zM1019 874h1v1h-1zM1022 463h1v1h-1zM1026 606h1v1h-1zM1027 465h1v1h-1zM1027 466h1v1h-1zM1027 606h1v1h-1zM1028 608h1v1h-1zM1030 606h1v1h-1zM1030 873h1v1h-1zM1031 608h1v1h-1zM1031 873h1v1h-1zM1032 873h1v1h-1zM1037 473h1v1h-1zM1038 611h1v1h-1zM1039 871h1v1h-1zM1046 615h1v1h-1zM1048 616h1v1h-1zM1050 616h1v1h-1zM1051 614h1v1h-1zM1054 615h1v1h-1zM1058 618h1v1h-1zM1060 618h1v1h-1zM1060 620h1v1h-1zM1061 618h1v1h-1zM1061 620h1v1h-1zM1061 621h1v1h-1zM1067 624h1v1h-1zM1070 629h1v1h-1zM1073 632h1v1h-1zM1074 633h1v1h-1zM1075 635h1v1h-1zM1075 636h1v1h-1zM1075 637h1v1h-1zM1076 637h1v1h-1zM1077 639h1v1h-1zM1081 646h1v1h-1zM1082 646h1v1h-1zM1082 649h1v1h-1zM1083 648h1v1h-1zM1083 650h1v1h-1zM1083 651h1v1h-1zM1115 820h1v1h-1zM1116 717h1v1h-1zM1116 722h1v1h-1zM1116 818h1v1h-1zM1117 724h1v1h-1zM1119 732h1v1h-1zM1119 808h1v1h-1zM1119 810h1v1h-1zM1120 737h1v1h-1zM1121 804h1v1h-1zM1122 742h1v1h-1zM1122 802h1v1h-1zM1123 745h1v1h-1zM1123 799h1v1h-1zM1124 796h1v1h-1zM1125 757h1v1h-1zM1125 787h1v1h-1zM1125 791h1v1h-1zM1126 754h1v1h-1zM1126 755h1v1h-1zM1126 759h1v1h-1zM1126 762h1v1h-1zM1126 766h1v1h-1zM1126 772h1v1h-1zM1126 785h1v1h-1zM1126 787h1v1h-1zM1126 788h1v1h-1z" fill="#5e706d" shape-rendering="crispEdges"/><path d="M868 506h1v1h-1zM869 506h1v1h-1zM870 500h1v1h-1zM870 502h1v1h-1zM870 504h1v1h-1zM871 501h1v1h-1zM871 502h1v1h-1zM871 509h1v1h-1zM873 493h1v1h-1zM873 495h1v1h-1zM873 511h1v1h-1zM874 490h1v1h-1zM874 494h1v1h-1zM876 492h1v1h-1zM878 487h1v1h-1zM879 486h1v1h-1zM879 518h1v1h-1zM880 480h1v1h-1zM880 483h1v1h-1zM880 484h1v1h-1zM881 481h1v1h-1zM882 479h1v1h-1zM882 480h1v1h-1zM884 477h1v1h-1zM884 478h1v1h-1zM886 476h1v1h-1zM887 473h1v1h-1zM890 471h1v1h-1zM892 467h1v1h-1zM892 470h1v1h-1zM893 466h1v1h-1zM894 466h1v1h-1zM894 468h1v1h-1zM896 464h1v1h-1zM898 461h1v1h-1zM899 463h1v1h-1zM900 462h1v1h-1zM902 462h1v1h-1zM907 468h1v1h-1zM907 469h1v1h-1zM908 470h1v1h-1zM909 471h1v1h-1zM912 474h1v1h-1zM912 475h1v1h-1zM916 480h1v1h-1zM919 481h1v1h-1zM920 482h1v1h-1zM922 710h1v1h-1zM924 710h1v1h-1zM925 489h1v1h-1zM925 490h1v1h-1zM925 667h1v1h-1zM925 673h1v1h-1zM925 709h1v1h-1zM926 491h1v1h-1zM926 662h1v1h-1zM926 664h1v1h-1zM926 665h1v1h-1zM926 668h1v1h-1zM926 669h1v1h-1zM926 673h1v1h-1zM927 444h1v1h-1zM927 445h1v1h-1zM927 662h1v1h-1zM927 675h1v1h-1zM927 676h1v1h-1zM927 677h1v1h-1zM927 707h1v1h-1zM927 708h1v1h-1zM928 666h1v1h-1zM928 675h1v1h-1zM928 678h1v1h-1zM929 656h1v1h-1zM929 660h1v1h-1zM929 661h1v1h-1zM929 700h1v1h-1zM929 701h1v1h-1zM929 703h1v1h-1zM929 707h1v1h-1zM930 659h1v1h-1zM930 697h1v1h-1zM930 701h1v1h-1zM931 444h1v1h-1zM931 659h1v1h-1zM931 693h1v1h-1zM931 699h1v1h-1zM932 656h1v1h-1zM933 442h1v1h-1zM933 652h1v1h-1zM933 656h1v1h-1zM933 657h1v1h-1zM934 650h1v1h-1zM934 653h1v1h-1zM935 652h1v1h-1zM936 648h1v1h-1zM936 652h1v1h-1zM937 440h1v1h-1zM937 678h1v1h-1zM938 441h1v1h-1zM938 649h1v1h-1zM938 651h1v1h-1zM939 440h1v1h-1zM939 648h1v1h-1zM939 677h1v1h-1zM940 441h1v1h-1zM940 649h1v1h-1zM940 679h1v1h-1zM941 440h1v1h-1zM941 645h1v1h-1zM941 649h1v1h-1zM941 678h1v1h-1zM941 679h1v1h-1zM942 648h1v1h-1zM943 646h1v1h-1zM943 677h1v1h-1zM944 645h1v1h-1zM944 646h1v1h-1zM945 642h1v1h-1zM945 677h1v1h-1zM945 678h1v1h-1zM947 642h1v1h-1zM948 639h1v1h-1zM950 438h1v1h-1zM952 438h1v1h-1zM955 437h1v1h-1zM957 438h1v1h-1zM958 438h1v1h-1zM959 438h1v1h-1zM969 867h1v1h-1zM973 868h1v1h-1zM978 869h1v1h-1zM981 870h1v1h-1zM988 871h1v1h-1zM991 872h1v1h-1zM998 873h1v1h-1zM999 873h1v1h-1zM1001 873h1v1h-1zM1004 873h1v1h-1zM1005 460h1v1h-1zM1013 453h1v1h-1zM1015 875h1v1h-1zM1020 875h1v1h-1zM1022 460h1v1h-1zM1024 461h1v1h-1zM1024 462h1v1h-1zM1026 464h1v1h-1zM1027 464h1v1h-1zM1028 874h1v1h-1zM1029 465h1v1h-1zM1029 602h1v1h-1zM1029 604h1v1h-1zM1029 874h1v1h-1zM1031 874h1v1h-1zM1034 605h1v1h-1zM1034 607h1v1h-1zM1034 608h1v1h-1zM1035 607h1v1h-1zM1036 470h1v1h-1zM1037 472h1v1h-1zM1038 607h1v1h-1zM1038 873h1v1h-1zM1041 611h1v1h-1zM1041 872h1v1h-1zM1042 610h1v1h-1zM1043 610h1v1h-1zM1044 611h1v1h-1zM1044 612h1v1h-1zM1045 612h1v1h-1zM1046 612h1v1h-1zM1049 613h1v1h-1zM1051 613h1v1h-1zM1053 613h1v1h-1zM1056 613h1v1h-1zM1060 615h1v1h-1zM1060 616h1v1h-1zM1061 616h1v1h-1zM1062 617h1v1h-1zM1065 619h1v1h-1zM1067 621h1v1h-1zM1068 622h1v1h-1zM1070 623h1v1h-1zM1070 626h1v1h-1zM1072 628h1v1h-1zM1074 631h1v1h-1zM1075 631h1v1h-1zM1076 634h1v1h-1zM1077 633h1v1h-1zM1077 636h1v1h-1zM1081 643h1v1h-1zM1082 645h1v1h-1zM1084 646h1v1h-1zM1084 649h1v1h-1zM1085 646h1v1h-1zM1085 647h1v1h-1zM1087 652h1v1h-1zM1088 652h1v1h-1zM1115 710h1v1h-1zM1116 714h1v1h-1zM1116 820h1v1h-1zM1117 717h1v1h-1zM1117 719h1v1h-1zM1118 723h1v1h-1zM1119 724h1v1h-1zM1119 729h1v1h-1zM1119 814h1v1h-1zM1120 728h1v1h-1zM1120 814h1v1h-1zM1121 733h1v1h-1zM1121 735h1v1h-1zM1121 811h1v1h-1zM1123 740h1v1h-1zM1123 742h1v1h-1zM1123 800h1v1h-1zM1124 745h1v1h-1zM1125 748h1v1h-1zM1126 790h1v1h-1zM1126 793h1v1h-1zM1127 753h1v1h-1zM1127 764h1v1h-1zM1127 785h1v1h-1zM1127 786h1v1h-1zM1128 765h1v1h-1zM1128 766h1v1h-1zM1128 770h1v1h-1zM1128 772h1v1h-1zM1128 775h1v1h-1z" fill="#c0c0c0" shape-rendering="crispEdges"/>
<polyline points="875,440.2 829.5,440.2 829.8,471.8 888.2,527.6" fill="none" stroke="#f42424" stroke-width="1.05" /><polyline points="888.2,527.6 923.2,527.4" fill="none" stroke="#f42424" stroke-width="1.1" stroke-dasharray="2.2 0.7"/><polyline points="923.3,527.4 923.3,589.2 940.8,589.2" fill="none" stroke="#f42424" stroke-width="1.15" /><polyline points="905,406.6 923.5,388.5" fill="none" stroke="#f42424" stroke-width="1.05" /><polyline points="923.5,388.5 960,423.7" fill="none" stroke="#f42424" stroke-width="1.0" stroke-dasharray="3 0.6 1.2 0.6"/><polyline points="958.8,442.6 970.6,431.4" fill="none" stroke="#f42424" stroke-width="1.1" /><polyline points="1016.3,440.3 1096.8,440.0" fill="none" stroke="#f42424" stroke-width="1.05" /><polyline points="1096.8,440.0 1098.5,541.8" fill="none" stroke="#f42424" stroke-width="1.0" /><rect x="838.15" y="379.85" width="1.1" height="1.1" fill="#f42424" opacity="0.85"/><rect x="839.65" y="379.45" width="1.1" height="1.1" fill="#f42424" opacity="0.85"/><rect x="842.05" y="379.95" width="1.1" height="1.1" fill="#f42424" opacity="0.85"/><rect x="869.55" y="379.85" width="1.1" height="1.1" fill="#f42424" opacity="0.85"/><rect x="838.05" y="395.55" width="1.1" height="1.1" fill="#f42424" opacity="0.85"/><rect x="842.25" y="395.85" width="1.1" height="1.1" fill="#f42424" opacity="0.85"/><rect x="869.75" y="395.25" width="1.1" height="1.1" fill="#f42424" opacity="0.85"/><rect x="915.35" y="405.55" width="1.1" height="1.1" fill="#f42424" opacity="0.85"/><rect x="912.95" y="407.95" width="1.1" height="1.1" fill="#f42424" opacity="0.85"/><rect x="917.75" y="407.95" width="1.1" height="1.1" fill="#f42424" opacity="0.85"/><rect x="915.35" y="410.45" width="1.1" height="1.1" fill="#f42424" opacity="0.85"/><rect x="930.05" y="418.85" width="1.1" height="1.1" fill="#f42424" opacity="0.85"/><rect x="939.55" y="423.55" width="1.1" height="1.1" fill="#f42424" opacity="0.85"/><rect x="937.25" y="425.45" width="1.1" height="1.1" fill="#f42424" opacity="0.85"/><rect x="942.45" y="426.25" width="1.1" height="1.1" fill="#f42424" opacity="0.85"/><rect x="938.65" y="428.55" width="1.1" height="1.1" fill="#f42424" opacity="0.85"/><rect x="949.05" y="429.75" width="1.1" height="1.1" fill="#f42424" opacity="0.85"/><rect x="952.85" y="429.25" width="1.1" height="1.1" fill="#f42424" opacity="0.85"/><rect x="950.05" y="433.55" width="1.1" height="1.1" fill="#f42424" opacity="0.85"/><rect x="953.35" y="432.85" width="1.1" height="1.1" fill="#f42424" opacity="0.85"/><rect x="875.45" y="336.45" width="1.1" height="1.1" fill="#f42424" opacity="0.85"/><rect x="1029.15" y="340.95" width="1.1" height="1.1" fill="#f42424" opacity="0.85"/><rect x="1040.95" y="352.05" width="1.1" height="1.1" fill="#f42424" opacity="0.85"/><rect x="1010.05" y="361.45" width="1.1" height="1.1" fill="#f42424" opacity="0.85"/><rect x="1021.25" y="372.05" width="1.1" height="1.1" fill="#f42424" opacity="0.85"/><rect x="1020.95" y="372.45" width="1.1" height="1.1" fill="#f42424" opacity="0.85"/><rect x="958.6" y="441.8" width="1.3" height="1.3" fill="#ff1010"/>
<path d="M572.50 122.05V907.31M572.50 122.05H1357.76M592.13 122.05V907.31M572.50 141.68H1357.76M611.76 122.05V907.31M572.50 161.31H1357.76M631.39 122.05V907.31M572.50 180.94H1357.76M651.03 122.05V907.31M572.50 200.58H1357.76M670.66 122.05V907.31M572.50 220.21H1357.76M690.29 122.05V907.31M572.50 239.84H1357.76M709.92 122.05V907.31M572.50 259.47H1357.76M729.55 122.05V907.31M572.50 279.10H1357.76M749.18 122.05V907.31M572.50 298.73H1357.76M768.82 122.05V907.31M572.50 318.37H1357.76M788.45 122.05V907.31M572.50 338.00H1357.76M808.08 122.05V907.31M572.50 357.63H1357.76M827.71 122.05V907.31M572.50 377.26H1357.76M847.34 122.05V907.31M572.50 396.89H1357.76M866.97 122.05V907.31M572.50 416.52H1357.76M886.61 122.05V907.31M572.50 436.16H1357.76M906.24 122.05V907.31M572.50 455.79H1357.76M925.87 122.05V907.31M572.50 475.42H1357.76M945.50 122.05V907.31M572.50 495.05H1357.76M965.13 122.05V907.31M572.50 514.68H1357.76M984.76 122.05V907.31M572.50 534.31H1357.76M1004.40 122.05V907.31M572.50 553.95H1357.76M1024.03 122.05V907.31M572.50 573.58H1357.76M1043.66 122.05V907.31M572.50 593.21H1357.76M1063.29 122.05V907.31M572.50 612.84H1357.76M1082.92 122.05V907.31M572.50 632.47H1357.76M1102.55 122.05V907.31M572.50 652.10H1357.76M1122.18 122.05V907.31M572.50 671.73H1357.76M1141.82 122.05V907.31M572.50 691.37H1357.76M1161.45 122.05V907.31M572.50 711.00H1357.76M1181.08 122.05V907.31M572.50 730.63H1357.76M1200.71 122.05V907.31M572.50 750.26H1357.76M1220.34 122.05V907.31M572.50 769.89H1357.76M1239.97 122.05V907.31M572.50 789.52H1357.76M1259.61 122.05V907.31M572.50 809.16H1357.76M1279.24 122.05V907.31M572.50 828.79H1357.76M1298.87 122.05V907.31M572.50 848.42H1357.76M1318.50 122.05V907.31M572.50 868.05H1357.76M1338.13 122.05V907.31M572.50 887.68H1357.76M1357.76 122.05V907.31M572.50 907.31H1357.76" stroke="#d1d1d6" stroke-opacity="0.5" stroke-width="1" fill="none"/>
<rect x="947.8" y="517.8" width="15" height="15" rx="3" fill="#222" transform="rotate(-39 955.0 525.3)"/><circle cx="955.3" cy="525.3" r="11.1" fill="none" stroke="#5a5ae6" stroke-width="2.7"/><path d="M963.8 518.8 L968.8 514.8 L966.3 519.3 Z" fill="#3cc85a" stroke="#3cc85a" stroke-width="1.5" stroke-linejoin="round"/><path d="M945.3 532.3 L941.3 535.8 L944.8 535.3 Z" fill="#5ad070" stroke="#5ad070" stroke-width="1" stroke-linejoin="round"/><path d="M947.3 515.3 L945.3 512.3 L948.3 513.3 Z" fill="#b03030" stroke="#b03030" stroke-width="1.2" stroke-linejoin="round"/><path d="M962.8 535.3 L965.8 538.8 L964.8 535.8 Z" fill="#e05050" stroke="#e05050" stroke-width="1.2" stroke-linejoin="round"/><rect x="954.0999999999999" y="507.99999999999994" width="5" height="1.2" fill="#10d010"/><rect x="953.5999999999999" y="508.79999999999995" width="1.3" height="4.5" fill="#e89088"/>
</svg></div>

<!-- RIGHT PANEL -->
<div class="abs" style="left:1565px;top:518.4px;width:0;height:0;border-top:4.2px solid transparent;border-bottom:4.2px solid transparent;border-left:5px solid #3a3a3a"></div>
<div class="abs" style="left:1579px;top:516px;width:1px;height:17px;background:repeating-linear-gradient(180deg,#bdb9b4 0 1px,transparent 1px 3px)"></div>
<div class="abs paneltitle" style="left:1582px;top:89px;width:271px;height:22px"><div class="t" style="left:26px;top:0">Views</div></div>
<svg class="abs" style="left:1586px;top:95px" width="16" height="11" viewBox="0 0 16 11"><path d="M0.5 1.5 L5 5.5 L0.5 9.5 Z" fill="#3d3d3d"/><rect x="4.5" y="1.5" width="11" height="8" rx="3" fill="#3d3d3d"/></svg>
<div class="closebtn" style="left:1832px;top:91px"></div>
<div class="t" style="left:1584px;top:120px">Type:</div>
<div class="abs" style="left:1627px;top:117px;width:138px;height:25px;border:1px solid #a9a59f;border-radius:4px;background:linear-gradient(#fbfaf9,#eeece8);overflow:hidden"><div class="t" style="left:4px;top:2px;letter-spacing:0.3px">TopDownOrtho (</div><div class="abs" style="left:115px;top:1px;width:22px;height:21px;background:linear-gradient(#faf9f8,#efede9)"></div><div class="arrd" style="left:122px;top:9px;border-left-width:4.5px;border-right-width:4.5px;border-top-width:5px"></div></div>
<div class="btn" style="left:1771px;top:117px;width:80px;height:25px;line-height:23px">Zero</div>
<div class="abs tree" style="left:1582px;top:150px;width:270.5px;height:773px"></div>
<div class="abs" style="left:1717px;top:152px;width:1px;height:770px;background:#d7d5d2"></div>
<div class="arrd" style="left:1588px;top:156.5px"></div>
<div class="t" style="left:1606px;top:150px;font-weight:bold">Current View</div>
<div class="t" style="left:1720px;top:150px;font-weight:bold">TopDownOrtho ...</div>
<div class="t" style="left:1626px;top:167px">Near Clip ...</div>
<div class="t" style="left:1720px;top:167px">0.01</div>
<div class="t" style="left:1626px;top:184px">Target Fra...</div>
<div class="t" style="left:1720px;top:184px">&lt;Fixed Frame&gt;</div>
<div class="t" style="left:1626px;top:201px">Scale</div>
<div class="t" style="left:1720px;top:201px">19.6316</div>
<div class="t" style="left:1626px;top:218px">Angle</div>
<div class="t" style="left:1720px;top:218px">1.5708</div>
<div class="t" style="left:1626px;top:235px">X</div>
<div class="t" style="left:1720px;top:235px">0.396188</div>
<div class="t" style="left:1626px;top:252px">Y</div>
<div class="t" style="left:1720px;top:252px">-0.158298</div>
<div class="btn" style="left:1584px;top:929px;width:85px;height:25px;line-height:23px">Save</div>
<div class="btn" style="left:1675px;top:929px;width:85px;height:25px;line-height:23px">Remove</div>
<div class="btn" style="left:1766px;top:929px;width:85px;height:25px;line-height:23px">Rename</div>

<!-- TIME PANEL -->
<div class="abs paneltitle" style="left:0;top:962px;width:1853px;height:22px"><div class="t" style="left:26px;top:0">Time</div></div>
<svg class="abs" style="left:3px;top:965px" width="17" height="17" viewBox="0 0 17 17"><circle cx="8.5" cy="8.5" r="7" fill="#fff" stroke="#333" stroke-width="1.6"/><path d="M8.5 4.5 V9 H12" fill="none" stroke="#333" stroke-width="1.5"/></svg>
<div class="closebtn" style="left:1832px;top:964px"></div>
<div class="t" style="left:11px;top:995px;letter-spacing:-0.51px">ROS Time:</div>
<div class="t" style="left:235px;top:995px;letter-spacing:-0.61px">ROS Elapsed:</div>
<div class="t" style="left:479px;top:995px;letter-spacing:0.01px">Wall Time:</div>
<div class="t" style="left:704px;top:995px;letter-spacing:-0.12px">Wall Elapsed:</div>
<div class="inp" style="left:87px;width:142px">324.82</div>
<div class="inp" style="left:331px;width:142px">127.12</div>
<div class="inp" style="left:556px;width:142px">1597335577.13</div>
<div class="inp" style="left:800px;width:142px">134.39</div>
<div class="cb" style="left:1726px;top:997px"></div>
<div class="t" style="left:1745px;top:995px;letter-spacing:0.2px">Experimental</div>
<div class="btn" style="left:2px;top:1027px;width:52px;height:25px;line-height:23px">Reset</div>
<div class="t" style="left:61px;top:1029px"><b>Left-Click:</b> Rotate. <b>Middle-Click:</b> Move X/Y. <b>Right-Click:</b>: Zoom. <b>Shift</b>: More options.</div>
<div class="t" style="right:1px;top:1027px">31 fps</div>
</body>
</html>
